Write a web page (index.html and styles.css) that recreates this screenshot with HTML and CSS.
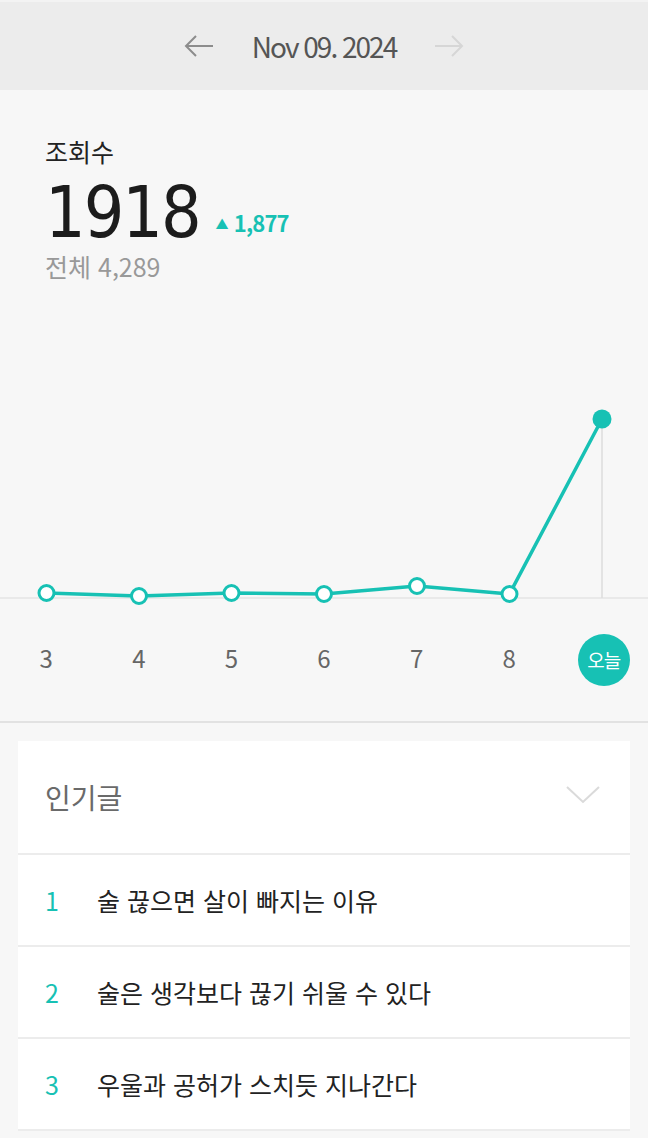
FILE: index.html
```html
<!DOCTYPE html>
<html lang="ko">
<head>
    <meta charset="UTF-8">
    <meta name="viewport" content="width=device-width, initial-scale=1.0">
    <title>통계 | 조회수</title>
    <link rel="stylesheet" href="styles.css">
</head>
<body>
    <!-- Date navigation -->
    <header class="date-bar">
        <button class="nav-btn" title="이전">
            <svg width="30" height="22" viewBox="0 0 30 22"><path d="M29 11H2M12 1L2 11l10 10" fill="none" stroke="#8c8c8c" stroke-width="2"/></svg>
        </button>
        <span class="date">Nov 09. 2024</span>
        <button class="nav-btn disabled" title="다음">
            <svg width="30" height="22" viewBox="0 0 30 22"><path d="M1 11h27M18 1l10 10-10 10" fill="none" stroke="#d6d6d6" stroke-width="2"/></svg>
        </button>
    </header>

    <section class="summary">
        <h2 class="label">조회수</h2>
        <div class="count">
            <span class="count-num">1918</span>
            <span class="delta"><span class="tri">▲</span>1,877</span>
        </div>
        <p class="total">전체 4,289</p>
    </section>

    <section class="chart">
        <svg class="chart-svg" width="648" height="320" viewBox="0 0 648 320">
            <line x1="0" y1="308" x2="648" y2="308" stroke="#e4e4e4" stroke-width="1.5"/>
            <line x1="602" y1="129" x2="602" y2="308" stroke="#dcdcdc" stroke-width="1.5"/>
            <polyline points="46.5,303 139,306 231.5,303 324,304 417,296 509.5,304 602,129" fill="none" stroke="#17c1b4" stroke-width="3.5" stroke-linejoin="round"/>
            <g fill="#fff" stroke="#17c1b4" stroke-width="3">
                <circle cx="46.5" cy="303" r="7.5"/>
                <circle cx="139" cy="306" r="7.5"/>
                <circle cx="231.5" cy="303" r="7.5"/>
                <circle cx="324" cy="304" r="7.5"/>
                <circle cx="417" cy="296" r="7.5"/>
                <circle cx="509.5" cy="304" r="7.5"/>
            </g>
            <circle cx="602" cy="129" r="9.5" fill="#17c1b4"/>
        </svg>
        <div class="days">
            <span class="day">3</span>
            <span class="day">4</span>
            <span class="day">5</span>
            <span class="day">6</span>
            <span class="day">7</span>
            <span class="day">8</span>
            <span class="day today">오늘</span>
        </div>
    </section>

    <section class="popular">
        <div class="card">
            <div class="card-head">
                <h3>인기글</h3>
                <svg width="34" height="18" viewBox="0 0 34 18"><path d="M1 1l16 15L33 1" fill="none" stroke="#dadada" stroke-width="2"/></svg>
            </div>
            <ul class="post-list">
                <li class="post"><span class="rank">1</span>술 끊으면 살이 빠지는 이유</li>
                <li class="post"><span class="rank">2</span>술은 생각보다 끊기 쉬울 수 있다</li>
                <li class="post"><span class="rank">3</span>우울과 공허가 스치듯 지나간다</li>
            </ul>
        </div>
    </section>
</body>
</html>
```

FILE: styles.css
```css
:root {
    --teal: #17c1b4;
    --bg: #f7f7f7;
    --text: #222;
    --muted: #999;
    --line: #ececec;
}

* {
    margin: 0;
    padding: 0;
    box-sizing: border-box;
}

body {
    font-family: 'Noto Sans CJK KR', 'Noto Sans', sans-serif;
    background: var(--bg);
    color: var(--text);
    width: 648px;
}

/* Date bar */
.date-bar {
    height: 90px;
    border-top: 2px solid #f3f3f3;
    background: #ececec;
    display: flex;
    justify-content: center;
    align-items: center;
    gap: 38px;
}

.nav-btn {
    background: none;
    border: none;
    display: flex;
    padding: 0;
}

.date {
    font-size: 28px;
    line-height: 34px;
    color: #555;
    letter-spacing: -2px;
}

/* Summary */
.summary {
    padding: 46px 45px 0;
}

.label {
    font-size: 25px;
    font-weight: 400;
    line-height: 30px;
    color: #222;
}

.count {
    margin-top: 16px;
    height: 62px;
    display: flex;
    align-items: baseline;
}

.count-num {
    font-family: 'DejaVu Sans Condensed', 'DejaVu Sans', sans-serif;
    font-stretch: condensed;
    font-size: 71px;
    line-height: 62px;
    color: #1c1c1c;
    letter-spacing: -2px;
}

.delta {
    margin-left: 16px;
    font-size: 22px;
    line-height: 26px;
    font-weight: 700;
    color: var(--teal);
    letter-spacing: -0.8px;
    position: relative;
    top: -5px;
}

.tri {
    font-size: 13px;
    margin-right: 6px;
    position: relative;
    top: -3px;
}

.total {
    margin-top: 7px;
    font-size: 25px;
    line-height: 30px;
    color: var(--muted);
}

/* Chart */
.chart {
    margin-top: 9px;
    border-bottom: 2px solid #e2e2e2;
}

.chart-svg {
    display: block;
}

.days {
    display: grid;
    grid-template-columns: repeat(7, 1fr);
    padding: 24px 0 35px;
}

.day {
    height: 52px;
    display: flex;
    justify-content: center;
    align-items: center;
    font-size: 24px;
    line-height: 30px;
    padding-bottom: 4px;
    color: #666;
}

.day.today {
    justify-self: center;
    width: 52px;
    margin-left: 4px;
    padding-bottom: 0;
    border-radius: 50%;
    background: var(--teal);
    color: #fff;
    font-size: 19px;
    letter-spacing: -1px;
}

/* Popular posts */
.popular {
    padding: 18px 18px 8px;
}

.card {
    background: #fff;
}

.card-head {
    height: 114px;
    padding: 0 30px 0 27px;
    display: flex;
    justify-content: space-between;
    align-items: center;
    border-bottom: 2px solid var(--line);
}

.card-head h3 {
    font-size: 28px;
    font-weight: 400;
    color: #6a6a6a;
}

.card-head svg {
    margin-top: -4px;
}

.post-list {
    list-style: none;
}

.post {
    height: 92px;
    display: flex;
    align-items: center;
    padding-left: 27px;
    border-bottom: 2px solid var(--line);
    font-size: 25px;
    color: #222;
}

.rank {
    width: 52px;
    color: var(--teal);
}
```
